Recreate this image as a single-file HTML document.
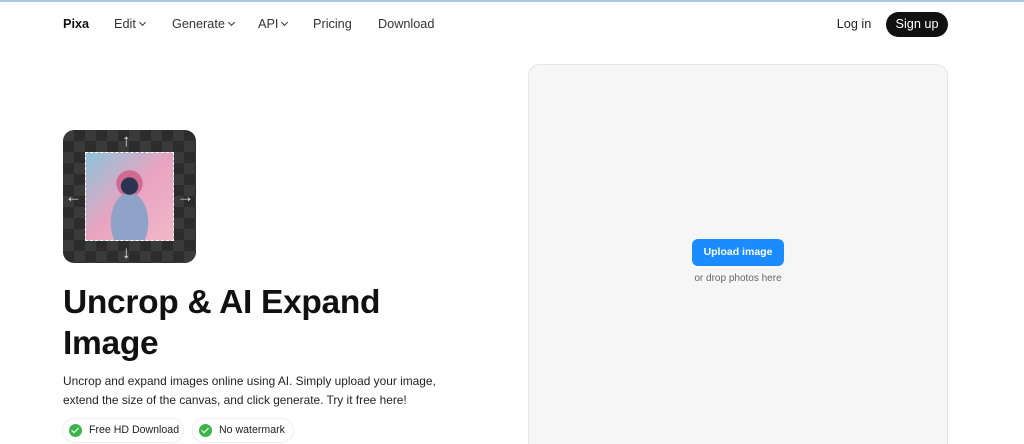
<!DOCTYPE html><html><head><style>
*{margin:0;padding:0;box-sizing:border-box}
html,body{width:1024px;height:444px;overflow:hidden}
body{background:#fff;font-family:"Liberation Sans",sans-serif;color:#111;position:relative}
.top{position:absolute;left:0;top:0;width:1024px;height:2px;background:#a9c7e3}
.nav{position:absolute;top:17px;font-size:12.7px;color:#333}
.car{display:inline-block;width:5px;height:5px;border-right:1.3px solid #333;border-bottom:1.3px solid #333;transform:rotate(45deg);margin-left:4px;position:relative;top:-3px}
.btn{position:absolute;top:12px;height:25px;border-radius:13px;font-size:12.7px;line-height:25px;text-align:center}
.panel{position:absolute;left:528px;top:64px;width:420px;height:380px;background:#f6f6f6;border:1px solid #e6e6e6;border-bottom:none;border-radius:12px 12px 0 0}
.up{position:absolute;left:692px;top:239px;width:92px;height:27px;background:#1a8cff;border-radius:6px;color:#fff;font-size:10.5px;font-weight:bold;line-height:27px;text-align:center}
.drop{position:absolute;left:660px;top:273px;width:156px;text-align:center;font-size:10px;color:#666}
.box{position:absolute;left:63px;top:130px;width:133px;height:133px;border-radius:11px;overflow:hidden;
background-color:#3a3a3a;background-image:linear-gradient(45deg,#2c2c2c 25%,transparent 25%,transparent 75%,#2c2c2c 75%),linear-gradient(45deg,#2c2c2c 25%,transparent 25%,transparent 75%,#2c2c2c 75%);background-size:22px 22px;background-position:0 0,11px 11px}
.img{position:absolute;left:22px;top:22px;width:89px;height:89px;border:1px dashed #fff;
background:radial-gradient(circle at 50% 38%,#2a3450 0 12%,transparent 13%),radial-gradient(ellipse at 50% 80%,#8fa2c8 0 30%,transparent 31%),radial-gradient(circle at 50% 35%,#d06a90 0 18%,transparent 19%),linear-gradient(135deg,#8cc4dc,#e8a4c0 50%,#f0b8c8)}
.ar{position:absolute;color:#e0e0e0;font-size:17px;line-height:17px}
h1{position:absolute;left:63px;top:282px;font-size:33.5px;line-height:41px;font-weight:bold;letter-spacing:-0.3px}
p{position:absolute;left:63px;top:372px;font-size:11.9px;line-height:19px;color:#222}
.chip{position:absolute;top:418px;height:25px;border:1px solid #eee;border-radius:13px;font-size:10.6px;line-height:23px;padding-left:26px;color:#222}
.chip i{position:absolute;left:6px;top:5px;width:13px;height:13px;border-radius:50%;background:#3bb54a}
.chip i:after{content:"";position:absolute;left:4px;top:2px;width:3px;height:6px;border-right:1.5px solid #fff;border-bottom:1.5px solid #fff;transform:rotate(45deg)}
</style></head><body>
<div class="top"></div>
<div class="nav" style="left:63px;font-weight:bold;color:#111">Pixa</div>
<div class="nav" style="left:114px">Edit<span class="car"></span></div>
<div class="nav" style="left:172px">Generate<span class="car"></span></div>
<div class="nav" style="left:258px">API<span class="car"></span></div>
<div class="nav" style="left:313px">Pricing</div>
<div class="nav" style="left:378px">Download</div>
<div class="btn" style="left:828px;width:52px;color:#222">Log in</div>
<div class="btn" style="left:886px;width:62px;background:#111;color:#fff">Sign up</div>
<div class="panel"></div>
<div class="up">Upload image</div>
<div class="drop">or drop photos here</div>
<div class="box"><div class="img"></div>
<span class="ar" style="left:59px;top:2px">↑</span><span class="ar" style="left:59px;top:114px">↓</span>
<span class="ar" style="left:2px;top:58px">←</span><span class="ar" style="left:114px;top:58px">→</span></div>
<h1>Uncrop &amp; AI Expand<br>Image</h1>
<p>Uncrop and expand images online using AI. Simply upload your image,<br>extend the size of the canvas, and click generate. Try it free here!</p>
<div class="chip" style="left:62px;width:122px"><i></i>Free HD Download</div>
<div class="chip" style="left:192px;width:102px"><i></i>No watermark</div>
</body></html>
